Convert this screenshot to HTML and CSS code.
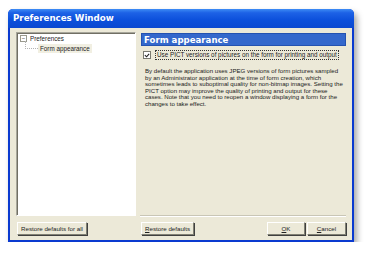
FILE: index.html
```html
<!DOCTYPE html>
<html lang="en">
<head>
  <meta charset="UTF-8" />
  <title>Preferences Window</title>
  <link rel="stylesheet" href="styles.css">
</head>
<body>
  <div class="window">
    <div class="titlebar">Preferences Window</div>

    <div class="client">
      <div class="tree">
        <div class="node">
          <span class="expander">&minus;</span>
          <span class="label">Preferences</span>
        </div>
        <div class="node child">
          <span class="branch"></span>
          <span class="label selected">Form appearance</span>
        </div>
      </div>

      <div class="pane">
        <div class="pane-header">Form appearance</div>
        <label class="check-row">
          <span class="checkbox">
            <svg width="7" height="7" viewBox="0 0 7 7"><path d="M1 3 L3 5 L6 1.5" fill="none" stroke="#222" stroke-width="1.3"/></svg>
          </span>
          <span class="check-label">Use PICT versions of pictures on the form for printing and output</span>
        </label>
        <p class="description">
          By default the application uses JPEG versions of form pictures sampled<br>
          by an Administrator application at the time of form creation, which<br>
          sometimes leads to suboptimal quality for non-bitmap images. Setting the<br>
          PICT option may improve the quality of printing and output for these<br>
          cases. Note that you need to reopen a window displaying a form for the<br>
          changes to take effect.
        </p>
      </div>

      <div class="btn-row">
        <button class="btn">Restore defaults for all</button>
      </div>
      <div class="btn-row">
        <button class="btn"><u>R</u>estore defaults</button>
        <span class="spacer"></span>
        <button class="btn btn-ok"><u>O</u>K</button>
        <button class="btn btn-cancel"><u>C</u>ancel</button>
      </div>
    </div>
  </div>
</body>
</html>
```

FILE: styles.css
```css
body {
  margin: 0;
  background-color: #fff;
  font-family: 'Liberation Sans', Arial, sans-serif;
}

.window {
  margin: 9px 0 0 8px;
  width: 346px;
  height: 233px;
  display: flex;
  flex-direction: column;
  background-color: #0a3ad0;
  border-radius: 5px 5px 0 0;
  box-shadow: 3px 4px 6px rgba(0,0,0,0.35);
}

.titlebar {
  height: 19px;
  line-height: 19px;
  padding-left: 5px;
  color: #fff;
  font-family: 'DejaVu Sans', sans-serif;
  font-weight: bold;
  font-size: 8.7px;
  border-radius: 5px 5px 0 0;
  background: linear-gradient(#3d8cf5 0%, #1d62e6 20%, #0b4fdb 60%, #0a48d0 100%);
}

.client {
  flex: 1;
  margin: 0 2px 2px;
  padding: 4px 6px 4px 6px;
  background-color: #ece9d8;
  display: grid;
  grid-template-columns: 120px 1fr;
  grid-template-rows: 1fr 14px;
  column-gap: 4px;
  row-gap: 6px;
  font-size: 6.3px;
  color: #222;
}

.tree {
  background-color: #fff;
  border: 1px solid;
  border-color: #a7a69b #fff #fff #a7a69b;
  box-shadow: inset 1px 1px 0 #716f64;
  padding: 1px 3px;
}

.node {
  display: flex;
  align-items: center;
  height: 9px;
}

.expander {
  width: 5px;
  height: 5px;
  border: 1px solid #9a9a8e;
  font-size: 6px;
  line-height: 5px;
  text-align: center;
  color: #333;
  margin-right: 3px;
}

.child {
  padding-left: 5px;
  height: 10px;
}

.branch {
  width: 12px;
  height: 7px;
  margin-top: -7px;
  border-left: 1px dotted #b3b3b3;
  border-bottom: 1px dotted #b3b3b3;
}

.selected {
  background-color: #f1efe2;
  padding: 1px 2px;
}

.pane {
  display: flex;
  flex-direction: column;
  border-bottom: 1px solid #c9c6b6;
  box-shadow: 0 1px 0 #fff;
}

.pane-header {
  margin: 1px 0 0 1px;
  height: 13px;
  line-height: 12px;
  padding-left: 2px;
  color: #fff;
  font-family: 'DejaVu Sans', sans-serif;
  font-weight: bold;
  font-size: 8.6px;
  background-color: #3468cc;
  border: 1px solid #2452b0;
  box-sizing: border-box;
}

.check-row {
  display: flex;
  align-items: center;
  margin: 4px 0 0 3px;
}

.checkbox {
  width: 6px;
  height: 6px;
  background-color: #fff;
  border: 1px solid #7a7a70;
  display: flex;
  align-items: center;
  justify-content: center;
  margin-right: 4px;
}

.check-label {
  border: 1px dotted #333;
  padding: 0 1px;
  line-height: 8px;
}

.description {
  margin: 8px 0 0 5px;
  font-size: 6.1px;
  line-height: 6.5px;
  white-space: nowrap;
}

.btn-row {
  display: flex;
  align-items: stretch;
}

.spacer {
  flex: 1;
}

.btn {
  font-family: 'Liberation Sans', Arial, sans-serif;
  font-size: 6.2px;
  color: #222;
  background-color: #ece9d8;
  border: 1px solid;
  border-color: #fff #808074 #808074 #fff;
  box-shadow: 1px 1px 0 #404040;
  padding: 0 3px;
  margin: 0 0 0 1px;
  height: 13px;
}

.btn-ok {
  width: 38px;
}

.btn-cancel {
  width: 39px;
  margin-left: 2px;
}
```
